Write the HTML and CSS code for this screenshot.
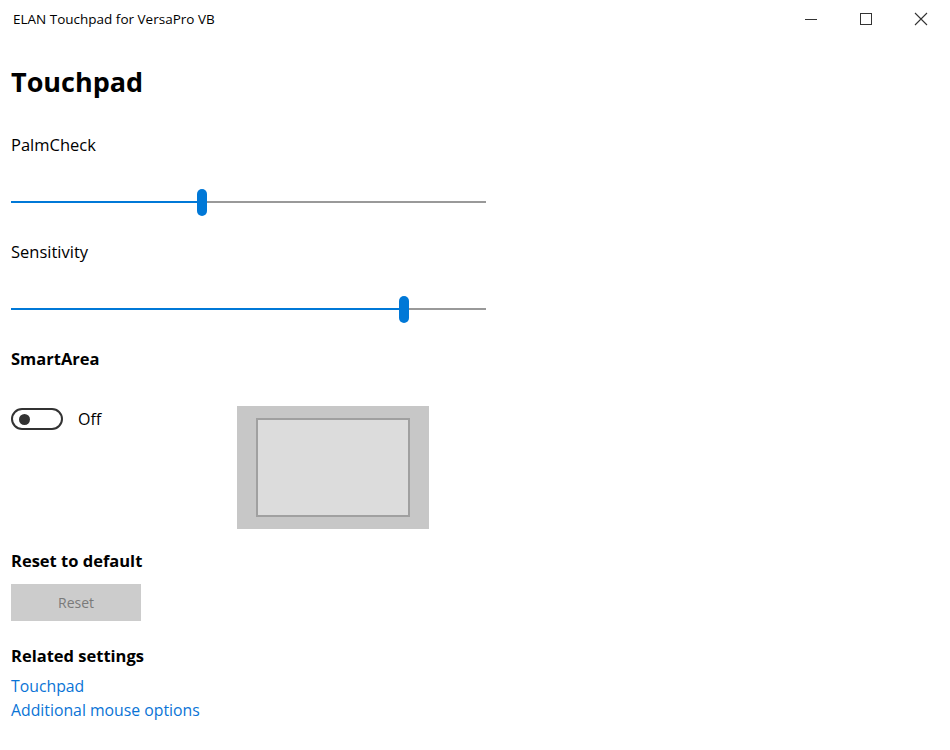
FILE: index.html
```html
<!DOCTYPE html>
<html>
<head>
<meta charset="utf-8">
<link rel="stylesheet" href="styles.css">
</head>
<body>
<div class="titlebar">
  <div class="title">ELAN Touchpad for VersaPro VB</div>
  <div class="controls">
    <div class="ctl"><svg width="14" height="14" viewBox="0 0 14 14"><path d="M1 7.5H13" stroke="#333" stroke-width="1" fill="none"/></svg></div>
    <div class="ctl"><svg width="14" height="14" viewBox="0 0 14 14"><rect x="1.5" y="1.5" width="11" height="11" stroke="#333" stroke-width="1" fill="none"/></svg></div>
    <div class="ctl"><svg width="14" height="14" viewBox="0 0 14 14"><path d="M1 1L13 13M13 1L1 13" stroke="#333" stroke-width="1.1" fill="none"/></svg></div>
  </div>
</div>
<main class="content">
  <h1 class="page-title">Touchpad</h1>
  <div class="label label-palm">PalmCheck</div>
  <div class="slider">
    <div class="track-fill" style="width:186px"></div>
    <div class="thumb"></div>
    <div class="track-rest"></div>
  </div>
  <div class="label label-sens">Sensitivity</div>
  <div class="slider slider-sens">
    <div class="track-fill" style="width:388px"></div>
    <div class="thumb"></div>
    <div class="track-rest"></div>
  </div>
  <h2 class="section section-smart">SmartArea</h2>
  <div class="smart-row">
    <div class="toggle-wrap">
      <div class="toggle"><div class="knob"></div></div>
      <span class="toggle-text">Off</span>
    </div>
    <div class="pad-outer"><div class="pad-inner"></div></div>
  </div>
  <h2 class="section section-reset">Reset to default</h2>
  <button class="reset-btn" disabled>Reset</button>
  <h2 class="section section-related">Related settings</h2>
  <a class="link" href="#">Touchpad</a>
  <a class="link" href="#">Additional mouse options</a>
</main>
</body>
</html>
```
FILE: styles.css
```css
html, body {
  margin: 0;
  padding: 0;
  background: #ffffff;
  font-family: "Open Sans", "Noto Sans", sans-serif;
  color: #000;
}
.titlebar {
  height: 38px;
  display: flex;
  align-items: center;
  justify-content: space-between;
}
.title {
  padding-left: 13px;
  font-size: 13.5px;
  color: #000;
  line-height: 38px;
}
.controls {
  display: flex;
  height: 38px;
  padding-right: 2px;
}
.ctl {
  width: 55px;
  height: 38px;
  display: flex;
  align-items: center;
  justify-content: center;
}
.content {
  padding-left: 11px;
  display: flex;
  flex-direction: column;
  align-items: flex-start;
}
.page-title {
  margin: 26px 0 0 0;
  font-size: 27px;
  line-height: 36px;
  font-weight: 700;
}
.label {
  font-size: 16.5px;
  line-height: 24px;
  margin: 0;
}
.label-palm { margin-top: 33px; }
.label-sens { margin-top: 25px; }
.slider {
  margin-top: 32px;
  width: 475px;
  height: 26px;
  display: flex;
  align-items: center;
}
.track-fill {
  height: 2px;
  background: #0078d7;
}
.track-rest {
  flex: 1;
  height: 2px;
  background: #999999;
}
.thumb {
  width: 10px;
  height: 27px;
  border-radius: 5px;
  background: #0078d7;
}
.section {
  margin: 0;
  font-size: 16.5px;
  line-height: 24px;
  font-weight: 700;
}
.section-smart { margin-top: 25px; }
.smart-row {
  margin-top: 35px;
  display: flex;
  align-items: flex-start;
}
.toggle-wrap {
  display: flex;
  align-items: center;
  width: 226px;
  margin-top: 1px;
}
.toggle {
  box-sizing: content-box;
  width: 42px;
  height: 18px;
  padding-left: 6px;
  border: 2px solid #333;
  border-radius: 11px;
  display: flex;
  align-items: center;
}
.knob {
  width: 11px;
  height: 11px;
  border-radius: 50%;
  background: #333;
}
.toggle-text {
  margin-left: 15px;
  font-size: 16px;
  line-height: 24px;
}
.pad-outer {
  width: 192px;
  height: 123px;
  background: #c7c7c7;
  display: flex;
  align-items: center;
  justify-content: center;
}
.pad-inner {
  width: 150px;
  height: 95px;
  background: #dcdcdc;
  border: 2px solid #a0a0a0;
}
.section-reset { margin-top: 20px; }
.reset-btn {
  margin-top: 11px;
  width: 130px;
  height: 37px;
  border: none;
  background: #cccccc;
  color: #7a7a7a;
  font-family: "Open Sans", "Noto Sans", sans-serif;
  font-size: 14px;
  padding: 0;
}
.section-related { margin-top: 23px; }
.link {
  font-size: 15.8px;
  line-height: 24px;
  color: #0a74d6;
  text-decoration: none;
}
.section-related + .link { margin-top: 6px; }
```
